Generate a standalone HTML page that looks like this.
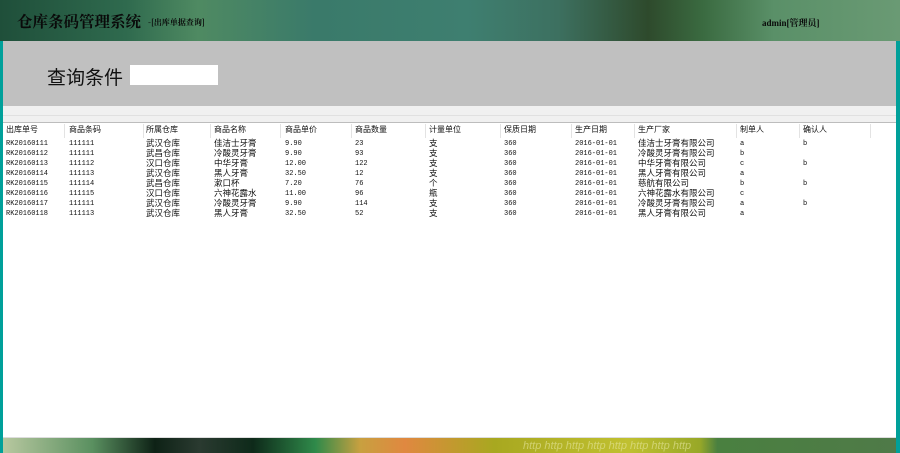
<!DOCTYPE html>
<html><head><meta charset="utf-8"><style>
*{margin:0;padding:0;box-sizing:border-box}
body{width:900px;height:453px;overflow:hidden;background:#fff;position:relative;font-family:"Liberation Serif","Noto Serif CJK SC","Noto Sans CJK SC",serif}
#hdr{position:absolute;left:0;top:0;width:900px;height:41px;background:linear-gradient(90deg,#1f4f3a 0%,#2f6a4e 14%,#4f8a62 22%,#3a7a6a 35%,#3e7f70 52%,#3d7060 62%,#2e4a2c 72%,#3a6a40 78%,#5a9068 86%,#6a9a74 100%)}
#hdr .t{position:absolute;left:17px;top:10px;font-size:15.5px;color:#0a0a0a;font-weight:bold;font-family:"Noto Serif CJK SC",serif}
#hdr .s{position:absolute;left:148px;top:17px;font-size:8px;color:#0a0a0a;font-weight:bold;font-family:"Noto Serif CJK SC",serif}
#hdr .u{position:absolute;left:762px;top:16px;font-size:9px;color:#0a0a0a;font-weight:bold}
#lb{position:absolute;left:0;top:41px;width:3px;height:412px;background:#00a09a}
#rb{position:absolute;left:896px;top:41px;width:4px;height:412px;background:#00a09a}
#gp{position:absolute;left:3px;top:41px;width:893px;height:65px;background:#c0c0c0}
#gp .q{position:absolute;left:44px;top:22px;font-size:19px;color:#111;font-family:"Liberation Sans","Noto Sans CJK SC",sans-serif}
#gp .in{position:absolute;left:127px;top:24px;width:88px;height:20px;background:#fff}
#st{position:absolute;left:3px;top:106px;width:893px;height:17px;background:#f0f0f0;border-bottom:1px solid #bdbdbd}
#st:after{content:"";position:absolute;left:0;top:9px;width:100%;height:1px;background:#e0e0e0}
.c{position:absolute;font-size:7px;color:#111;white-space:nowrap;line-height:10px;font-family:"Liberation Mono","Noto Sans CJK SC",monospace}
.h{font-size:8px}
.sep{position:absolute;top:124px;width:1px;height:14px;background:#e3e3e3}
#ft{position:absolute;left:3px;top:437px;width:893px;height:16px;background:linear-gradient(90deg,#b8c8a0 0%,#5a9060 10%,#0e2216 17%,#2a3a30 22%,#0e2a1a 28%,#2f8a4a 35%,#c8a040 40%,#e08840 45%,#a8a820 55%,#c0c030 70%,#98a828 78%,#4a8040 80%,#4f7a48 100%);border-top:1px solid #ddd}
#ft span{position:absolute;left:520px;top:2px;font-size:11px;font-style:italic;color:rgba(230,230,160,.6);font-family:"Liberation Sans",sans-serif}
</style></head><body>
<div id="hdr"><div class="t">仓库条码管理系统</div><div class="s">-[出库单据查询]</div><div class="u">admin[管理员]</div></div>
<div id="lb"></div><div id="rb"></div>
<div id="gp"><div class="q">查询条件</div><div class="in"></div></div>
<div id="st"></div>
<div id="tb"></div>
<div id="ft"><span>http http http http http http http http</span></div>
<script>
var xs=[6,69,146,214,285,355,429,504,575,638,740,803];
var seps=[64,143,210,280,351,425,500,571,634,736,799,870];
var h=["出库单号","商品条码","所属仓库","商品名称","商品单价","商品数量","计量单位","保质日期","生产日期","生产厂家","制单人","确认人"];
var d=[
["RK20160111","111111","武汉仓库","佳洁士牙膏","9.90","23","支","360","2016-01-01","佳洁士牙膏有限公司","a","b"],
["RK20160112","111111","武昌仓库","冷酸灵牙膏","9.90","93","支","360","2016-01-01","冷酸灵牙膏有限公司","b",""],
["RK20160113","111112","汉口仓库","中华牙膏","12.00","122","支","360","2016-01-01","中华牙膏有限公司","c","b"],
["RK20160114","111113","武汉仓库","黑人牙膏","32.50","12","支","360","2016-01-01","黑人牙膏有限公司","a",""],
["RK20160115","111114","武昌仓库","漱口杯","7.20","76","个","360","2016-01-01","慈航有限公司","b","b"],
["RK20160116","111115","汉口仓库","六神花露水","11.00","96","瓶","360","2016-01-01","六神花露水有限公司","c",""],
["RK20160117","111111","武汉仓库","冷酸灵牙膏","9.90","114","支","360","2016-01-01","冷酸灵牙膏有限公司","a","b"],
["RK20160118","111113","武汉仓库","黑人牙膏","32.50","52","支","360","2016-01-01","黑人牙膏有限公司","a",""]];
var s="";
seps.forEach(function(x){s+='<div class="sep" style="left:'+x+'px"></div>'});
h.forEach(function(t,i){s+='<div class="c h" style="left:'+xs[i]+'px;top:126px">'+t+'</div>'});
d.forEach(function(r,j){r.forEach(function(t,i){var cjk=/[^\x00-\x7f]/.test(t);s+='<div class="c" style="left:'+xs[i]+'px;top:'+(139+j*10)+'px'+(cjk?';font-size:8.5px':'')+'">'+t+'</div>'})});
document.getElementById("tb").innerHTML=s;
</script>
</body></html>
